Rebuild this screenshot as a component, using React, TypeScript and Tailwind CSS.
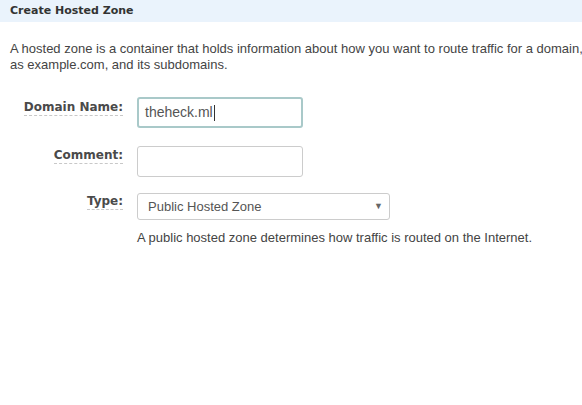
import React from "react";

export default function App() {
  const label =
    "font-['DejaVu_Sans',Verdana,sans-serif] text-[12px] font-bold text-[#4a4a4a] border-b border-dashed border-[#c8c8c8] leading-[15px]";
  return (
    <div className="w-[582px] h-[405px] overflow-hidden bg-white">
      <div className="h-[22px] bg-[#eaf3fc] flex items-center pl-[10px]">
        <span className="font-['DejaVu_Sans',Verdana,sans-serif] text-[11px] font-bold text-[#333]">
          Create Hosted Zone
        </span>
      </div>
      <p className="whitespace-nowrap mt-[19px] pl-[10px] font-['Liberation_Sans',Arial,sans-serif] text-[13px] leading-[16px] text-[#444]">
        A hosted zone is a container that holds information about how you want to route traffic for a domain,
        <br />
        as example.com, and its subdomains.
      </p>
      <div className="mt-[24px] grid grid-cols-[123px_1fr] gap-x-[14px]">
        <div className="flex justify-end items-start pt-[3px]">
          <span className={label}>Domain Name:</span>
        </div>
        <div>
          <div className="w-[166px] h-[31px] rounded-[3px] border-2 border-[#a9c9c9] flex items-center pl-[6px] font-['Liberation_Sans',Arial,sans-serif] text-[14px] text-[#555]">
            theheck.ml<span className="inline-block w-px h-[16px] bg-[#333] ml-[1px]" />
          </div>
        </div>
        <div className="flex justify-end items-start pt-[2px] mt-[18px]">
          <span className={label}>Comment:</span>
        </div>
        <div className="mt-[18px]">
          <div className="w-[166px] h-[31px] rounded-[3px] border border-[#ccc]" />
        </div>
        <div className="flex justify-end items-start pt-[1px] mt-[16px]">
          <span className={label}>Type:</span>
        </div>
        <div className="mt-[16px]">
          <div className="w-[253px] h-[27px] rounded-[3px] border border-[#ccc] flex items-center justify-between pl-[10px] pr-[6px] font-['Liberation_Sans',Arial,sans-serif] text-[13px] text-[#555]">
            <span>Public Hosted Zone</span>
            <span className="text-[9px] text-[#666]">▼</span>
          </div>
          <p className="mt-[10px] font-['Liberation_Sans',Arial,sans-serif] text-[13px] leading-[16px] text-[#444]">
            A public hosted zone determines how traffic is routed on the Internet.
          </p>
        </div>
      </div>
    </div>
  );
}
